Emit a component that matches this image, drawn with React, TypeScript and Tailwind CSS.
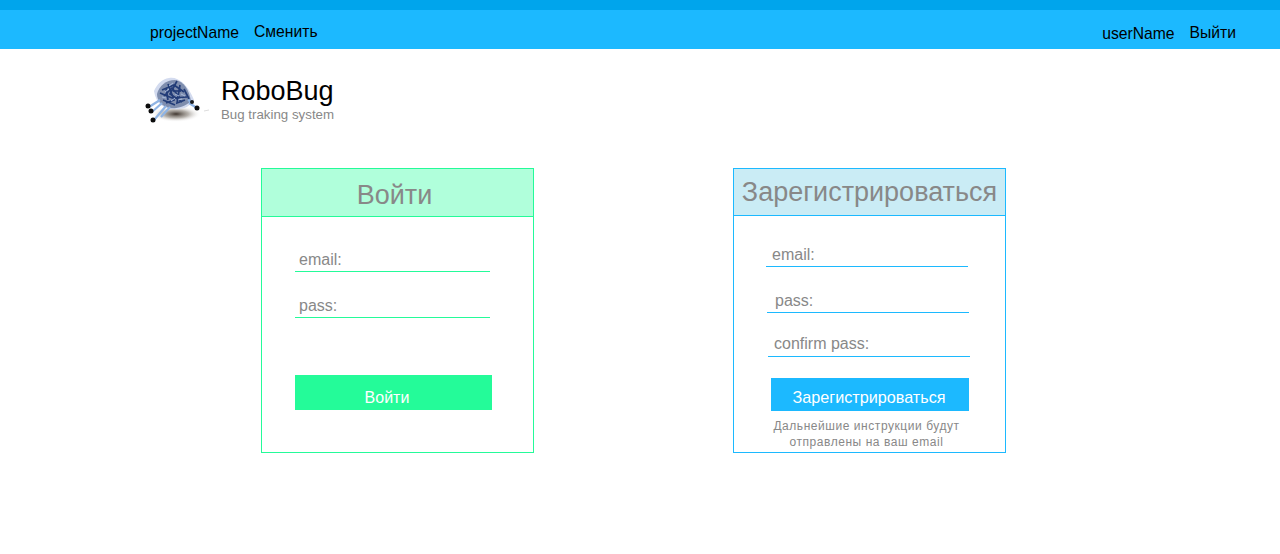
const wires = [
  "M18 14 L30 9 L40 16",
  "M20 20 L28 12 L36 22",
  "M24 8 L30 24 L22 27",
  "M33 5 L26 18 L38 26",
  "M16 17 L28 22 L43 21",
  "M36 9 L33 27 L41 24",
  "M22 12 L24 24",
  "M40 13 L45 23",
  "M29 15 L37 15",
  "M19 24 L31 29",
];

const sparks = [
  "M21 16 L25 13",
  "M31 18 L35 20",
  "M27 25 L31 22",
  "M37 18 L41 20",
  "M25 10 L29 7",
  "M34 24 L38 23",
  "M18 21 L22 22",
];

function BugLogo() {
  return (
    <svg width="68" height="50" viewBox="0 0 68 50" className="block">
      <defs>
        <radialGradient id="shadow">
          <stop offset="0%" stopColor="#2a2018" stopOpacity="0.9" />
          <stop offset="50%" stopColor="#6f675c" stopOpacity="0.5" />
          <stop offset="100%" stopColor="#ffffff" stopOpacity="0" />
        </radialGradient>
        <filter id="soft">
          <feGaussianBlur stdDeviation="0.45" />
        </filter>
      </defs>
      <ellipse cx="32" cy="38" rx="25" ry="8" fill="url(#shadow)" />
      <path d="M60 35 L65 34" stroke="#dddddd" strokeWidth="1" />
      <g filter="url(#soft)">
        <path d="M10 15 C13 8 18 3 25 2 C33 0 44 8 50 24 C46 31 38 34 30 33 C20 33 12 28 10 15 Z" fill="#d3dbef" />
        <path d="M13 18 C15 10 22 4 31 4 C40 5 45 14 47 25 C41 31 32 33 25 32 C18 30 13 25 13 18 Z" fill="#7f8eae" />
        {wires.map((d) => (
          <path key={d} d={d} stroke="#233c78" strokeWidth="1.7" fill="none" />
        ))}
        {sparks.map((d) => (
          <path key={d} d={d} stroke="#a9bbdd" strokeWidth="1" fill="none" />
        ))}
        <path d="M16 24 L5 31 M18 27 L8 36 M22 30 L10 44 M26 31 L17 41 M45 27 L53 32 M44 24 L48 26" stroke="#8fb4e4" strokeWidth="2.2" fill="none" />
      </g>
      <circle cx="4" cy="30" r="2.5" fill="#0c0c0c" />
      <circle cx="7" cy="35" r="2.5" fill="#0c0c0c" />
      <circle cx="9" cy="44" r="2.5" fill="#0c0c0c" />
      <circle cx="53" cy="32" r="2.5" fill="#0c0c0c" />
      <circle cx="48" cy="26" r="2" fill="#1a1a1a" />
    </svg>
  );
}

function Field({ placeholder, className }: { placeholder: string; className: string }) {
  return (
    <input
      placeholder={placeholder}
      className={`block h-[24px] border-b text-base text-[#888888] outline-none placeholder:text-[#888888] ${className}`}
    />
  );
}

export default function App() {
  return (
    <div className="min-h-[554px] bg-white font-['Liberation_Sans',Arial,sans-serif] text-black">
      <div className="h-[10px] bg-[#00a5ec]" />
      <header className="flex h-[39px] justify-between bg-[#1cb9ff] pl-[150px] pr-[44px] text-[15.7px]">
        <div className="flex gap-[15px] pt-[13px]">
          <span className="leading-[20px]">projectName</span>
          <span className="-mt-[1px] leading-[20px]">Сменить</span>
        </div>
        <div className="flex gap-[15px] pt-[14px]">
          <span className="leading-[20px]">userName</span>
          <span className="-mt-[1px] leading-[20px]">Выйти</span>
        </div>
      </header>

      <div className="flex pl-[144px] pt-[27px]">
        <BugLogo />
        <div className="ml-[9px]">
          <h1 className="text-[27px] leading-[30px]">RoboBug</h1>
          <p className="mt-[1px] text-[13.3px] leading-[15px] text-[#888888]">Bug traking system</p>
        </div>
      </div>

      <main className="mt-[42px] flex gap-[199px] pl-[261px]">
        <section className="h-[285px] w-[273px] border border-[#24fb99]">
          <h2 className="h-[48px] border-b border-[#24fb99] bg-[#b0ffdb] pr-[6px] pt-[10px] text-center text-[27px] leading-[32px] text-[#888888]">
            Войти
          </h2>
          <div className="pl-[33px] pt-[31px]">
            <Field placeholder="email:" className="w-[195px] border-[#24fb99] pl-[4px]" />
            <Field placeholder="pass:" className="mt-[22px] w-[195px] border-[#24fb99] pl-[4px]" />
            <button className="mt-[57px] block h-[35px] w-[197px] bg-[#24fb99] pr-[13px] pt-[9px] text-center text-base leading-[28px] text-white">
              Войти
            </button>
          </div>
        </section>

        <section className="h-[285px] w-[273px] border border-[#1cb9ff]">
          <h2 className="h-[47px] border-b border-[#1cb9ff] bg-[#caecf5] pt-[7px] text-center text-[27px] leading-[32px] text-[#888888]">
            Зарегистрироваться
          </h2>
          <div className="pt-[27px]">
            <Field placeholder="email:" className="ml-[32px] w-[202px] border-[#1cb9ff] pl-[6px]" />
            <Field placeholder="pass:" className="ml-[33px] mt-[22px] w-[202px] border-[#1cb9ff] pl-[8px]" />
            <Field placeholder="confirm pass:" className="ml-[34px] mt-[20px] w-[202px] border-[#1cb9ff] pb-[2px] pl-[6px]" />
            <button className="ml-[37px] mt-[21px] block h-[33px] w-[198px] bg-[#1cb9ff] pr-[2px] pt-[4px] text-center text-[16.2px] leading-[28px] text-white">
              Зарегистрироваться
            </button>
            <p className="mt-[7px] pr-[6px] text-center text-[12px] leading-[16px] tracking-[0.55px] text-[#888888]">
              Дальнейшие инструкции будут
              <br />
              отправлены на ваш email
            </p>
          </div>
        </section>
      </main>
    </div>
  );
}
